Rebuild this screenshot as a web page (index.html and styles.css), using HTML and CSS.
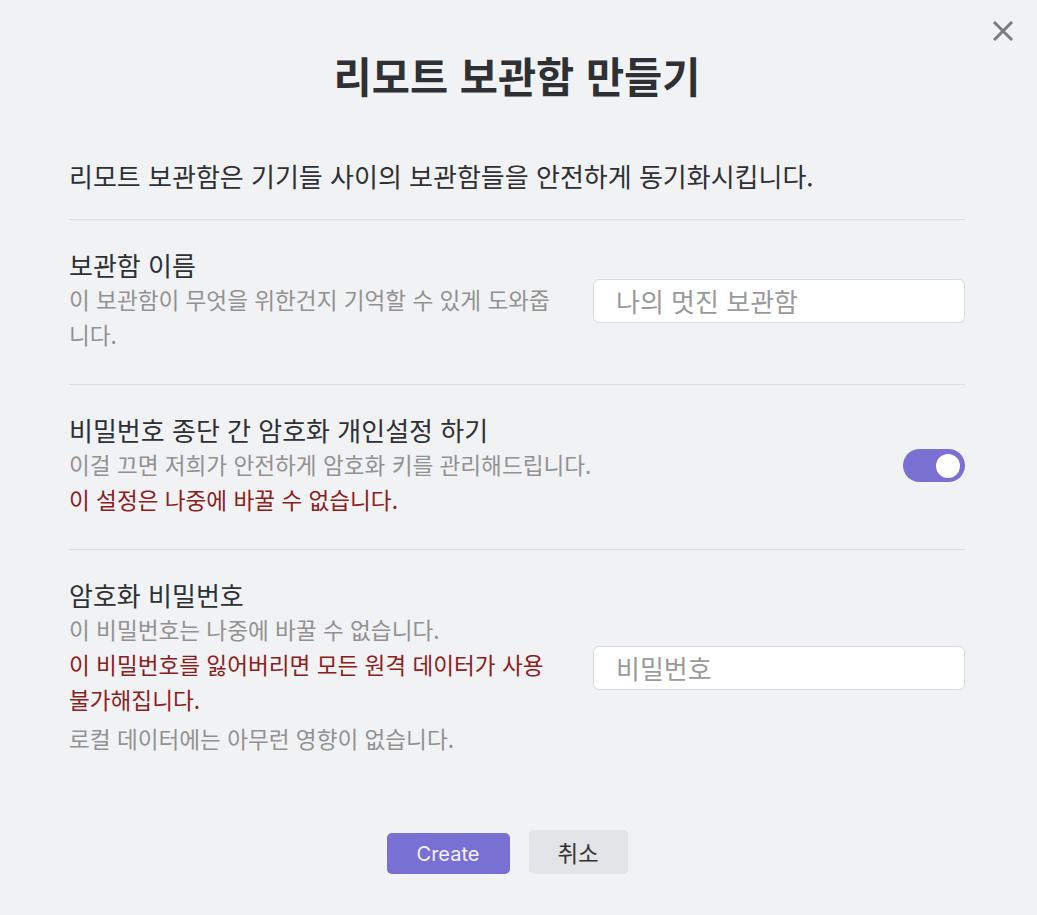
FILE: index.html
```html
<!DOCTYPE html>
<html lang="ko">
<head>
<meta charset="utf-8">
<link rel="stylesheet" href="styles.css">
</head>
<body>
<div class="modal">
  <button class="close" aria-label="닫기">
    <svg viewBox="0 0 20 20" width="20" height="20"><path d="M2 2 L18 18 M18 2 L2 18" stroke="#7b7b7d" stroke-width="3" stroke-linecap="square" fill="none"/></svg>
  </button>
  <h1 class="title">리모트 보관함 만들기</h1>
  <p class="intro">리모트 보관함은 기기들 사이의 보관함들을 안전하게 동기화시킵니다.</p>

  <div class="setting">
    <div class="info">
      <div class="label">보관함 이름</div>
      <div class="desc">이 보관함이 무엇을 위한건지 기억할 수 있게 도와줍니다.</div>
    </div>
    <div class="control">
      <input class="field" type="text" placeholder="나의 멋진 보관함">
    </div>
  </div>

  <div class="setting">
    <div class="info">
      <div class="label">비밀번호 종단 간 암호화 개인설정 하기</div>
      <div class="desc">이걸 끄면 저희가 안전하게 암호화 키를 관리해드립니다.</div>
      <div class="desc warn">이 설정은 나중에 바꿀 수 없습니다.</div>
    </div>
    <div class="control">
      <div class="toggle"><span class="knob"></span></div>
    </div>
  </div>

  <div class="setting">
    <div class="info">
      <div class="label">암호화 비밀번호</div>
      <div class="desc">이 비밀번호는 나중에 바꿀 수 없습니다.</div>
      <div class="desc warn">이 비밀번호를 잃어버리면 모든 원격 데이터가 사용 불가해집니다.</div>
      <div class="desc last">로컬 데이터에는 아무런 영향이 없습니다.</div>
    </div>
    <div class="control">
      <input class="field" type="password" placeholder="비밀번호">
    </div>
  </div>

  <div class="buttons">
    <button class="btn primary">Create</button>
    <button class="btn secondary">취소</button>
  </div>
</div>
</body>
</html>
```

FILE: styles.css
```css
html, body {
  margin: 0;
  padding: 0;
  background: #f1f2f4;
}
body {
  font-family: "Noto Sans CJK KR", "Noto Sans", sans-serif;
  color: #2e3033;
}
.modal {
  position: relative;
  width: 1037px;
  height: 915px;
  box-sizing: border-box;
  padding: 0 72px 0 69px;
}
.close {
  position: absolute;
  top: 21px;
  right: 24px;
  width: 20px;
  height: 20px;
  padding: 0;
  border: 0;
  background: none;
}
.close svg { display: block; }
.title {
  margin: 0;
  padding-top: 50px;
  font-size: 41.5px;
  line-height: 50px;
  font-weight: 700;
  text-align: center;
  color: #2e3033;
}
.intro {
  margin: 0;
  padding-top: 61px;
  padding-bottom: 28px;
  font-size: 26px;
  line-height: 30px;
  color: #2e3033;
}
.setting {
  display: flex;
  align-items: center;
  gap: 34px;
  border-top: 1px solid #dcdde0;
  padding: 29px 0 32px;
}
.info {
  flex: 1;
  min-width: 0;
}
.label {
  font-size: 26px;
  line-height: 31px;
  margin-bottom: 2px;
  color: #2e3033;
}
.desc {
  font-size: 22.6px;
  line-height: 35px;
  color: #919191;
}
.desc.warn { color: #8b2020; }
.desc.last { margin-top: 4px; }
.control {
  flex: 0 0 auto;
  display: flex;
  justify-content: flex-end;
}
.field {
  width: 372px;
  height: 44px;
  box-sizing: border-box;
  border: 1px solid #dadbde;
  border-radius: 6px;
  background: #fff;
  padding: 0 22px;
  font-family: "Noto Sans CJK KR", sans-serif;
  font-size: 26px;
  color: #2e3033;
  outline: none;
}
.field::placeholder { color: #9a9a9a; }
.toggle {
  width: 62px;
  height: 33px;
  border-radius: 17px;
  background: #7a70d2;
  display: flex;
  align-items: center;
  justify-content: flex-end;
  padding-right: 5px;
  box-sizing: border-box;
}
.knob {
  width: 24px;
  height: 24px;
  border-radius: 50%;
  background: #fff;
}
.buttons {
  display: flex;
  justify-content: center;
  align-items: flex-end;
  gap: 19px;
  margin-top: 42px;
  padding-right: 20px;
}
.btn {
  border: 0;
  border-radius: 5px;
  font-family: Inter, "Noto Sans CJK KR", sans-serif;
  font-size: 20px;
  padding: 0;
}
.primary {
  width: 123px;
  height: 41px;
  background: #7870d3;
  color: #f4f2ff;
}
.secondary {
  width: 99px;
  height: 44px;
  background: #e3e4e8;
  color: #333;
  font-size: 22.4px;
}
```
